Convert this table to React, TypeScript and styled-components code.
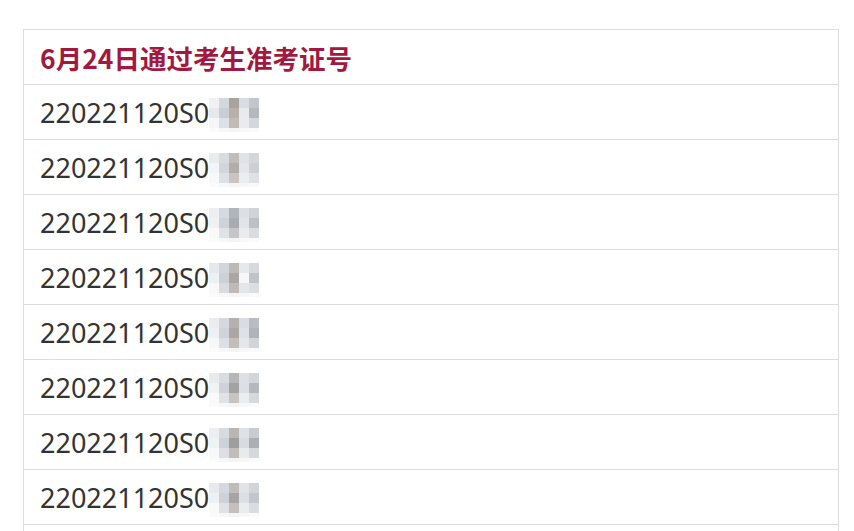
import styled, { createGlobalStyle } from "styled-components";

const GlobalStyle = createGlobalStyle`
  body {
    margin: 0;
    background: #fff;
    font-family: "Noto Sans", "Open Sans", "Noto Sans CJK SC", sans-serif;
  }
`;

// 打码部分的颜色，每行 4x5 个格子（最后一行很浅）
const fade = ["#fbfbfc", "#f6f7f8", "#f4f4f5", "#f7f7f8", "#fafafa"];
const mosaics: string[][] = [
  ["#f0f1f4", "#d3d7de", "#aaa39d", "#d9dce2", "#c3c6cc", "#e6e8ec", "#c9cdd5", "#b8b0a9", "#e8eaee", "#b4b8bf", "#f5f6f7", "#dde0e6", "#c2bbb5", "#e9ebee", "#d4d7dc"],
  ["#e9ebef", "#d8dbe1", "#c0bcb8", "#dfe2e6", "#d3d6db", "#f3f4f6", "#d1d5dc", "#b2ada9", "#e4e6ea", "#ccd0d5", "#f8f8f9", "#dde0e5", "#c9c4bf", "#ebedf0", "#dee1e5"],
  ["#eceef1", "#d6d9df", "#b0b4bb", "#dcdfe4", "#d0d3d8", "#f0f1f3", "#ced2d9", "#a9abb0", "#e1e4e8", "#bdc1c7", "#f9f9fa", "#e0e3e6", "#c5c6c9", "#e9ebee", "#dadde0"],
  ["#e5e8ec", "#d2d6dc", "#bcb9b6", "#e6e8ec", "#d6d9dd", "#edeff2", "#ccd0d7", "#a9a6a4", "#f6f7f8", "#c0c3c8", "#f8f8f9", "#d8dbe0", "#bfbab6", "#e4e6ea", "#dbdee2"],
  ["#eaecef", "#d5d8de", "#b6b1ad", "#d9dce2", "#b9bcc2", "#eff0f3", "#d0d3d9", "#aba7a4", "#dee1e5", "#b0b4ba", "#f6f7f8", "#dcdfe3", "#c3beb9", "#e5e7ea", "#d1d4d8"],
  ["#e8eaee", "#d9dce1", "#b6b6b8", "#dde0e4", "#d2d5d9", "#f1f2f4", "#cfd2d8", "#a3a2a3", "#dcdfe3", "#b5b8bd", "#f8f9f9", "#e0e2e6", "#c6c3c0", "#ebedef", "#d6d9dc"],
  ["#eceef1", "#d7dade", "#b9b6b3", "#dee1e5", "#c8cbd0", "#f0f1f3", "#cdd1d8", "#9f9e9f", "#d8dbe0", "#abafb5", "#f7f8f9", "#dddfe3", "#c0bdba", "#e8eaec", "#d5d8dc"],
  ["#e6e9ed", "#d5d8de", "#bfbcb9", "#e1e3e7", "#d1d4d8", "#eff0f3", "#ced1d8", "#a6a4a4", "#dcdfe3", "#c3c6cb", "#f8f9f9", "#dfe1e5", "#c2bfbc", "#eaecee", "#d9dce0"],
];

function Mosaic({ cells }: { cells: string[] }) {
  return (
    <MosaicGrid>
      {[...cells, ...fade].map((c, i) => (
        <MosaicCell key={i} $color={c} />
      ))}
    </MosaicGrid>
  );
}

function App() {
  return (
    <Page>
      <GlobalStyle />
      <Table>
        <HeaderCell>6月24日通过考生准考证号</HeaderCell>
        {mosaics.map((cells, i) => (
          <Row key={i}>
            <NumberText>220221120S0</NumberText>
            <Mosaic cells={cells} />
          </Row>
        ))}
        <Row />
      </Table>
    </Page>
  );
}

const Page = styled.div`
  padding: 29px 16px 0 23px;
  height: 531px;
  box-sizing: border-box;
  overflow: hidden;
`;

const Table = styled.div`
  width: 816px;
  border: 1px solid #dddddd;
  border-bottom: none;
  box-sizing: border-box;
`;

const HeaderCell = styled.div`
  height: 55px;
  box-sizing: border-box;
  border-bottom: 1px solid #dddddd;
  padding: 0 16px;
  display: flex;
  align-items: center;
  font-family: "Noto Sans CJK SC", "Noto Sans", sans-serif;
  font-size: 26.5px;
  font-weight: 700;
  color: #a3183e;
`;

const Row = styled.div`
  height: 55px;
  box-sizing: border-box;
  border-bottom: 1px solid #dddddd;
  padding: 0 16px;
  display: flex;
  align-items: center;
`;

const NumberText = styled.span`
  font-size: 27px;
  color: #333333;
`;

const MosaicGrid = styled.div`
  display: grid;
  grid-template-columns: repeat(5, 10px);
  grid-template-rows: repeat(3, 10px) 4px;
  margin-top: 6px;
`;

const MosaicCell = styled.div<{ $color: string }>`
  background: ${({ $color }) => $color};
`;

export default App;
